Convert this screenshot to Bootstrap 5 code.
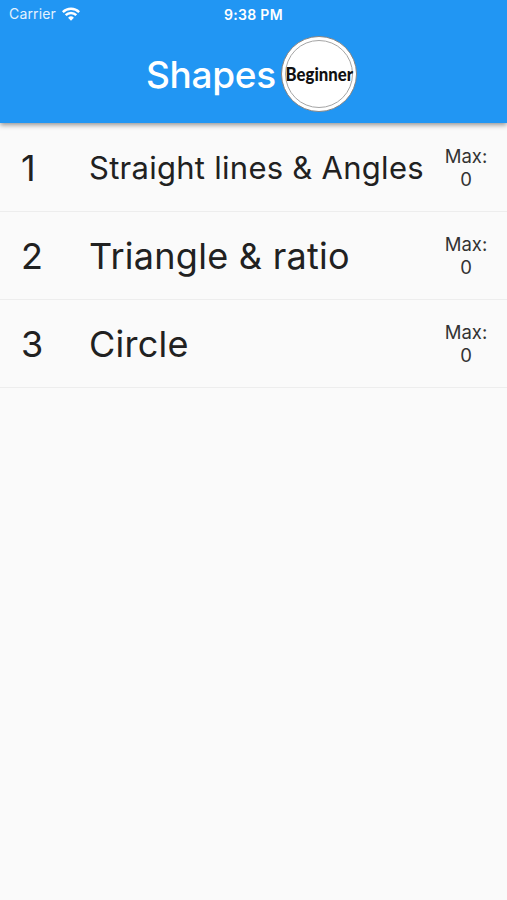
<!DOCTYPE html>
<html lang="en">
<head>
<meta charset="utf-8">
<meta name="viewport" content="width=device-width, initial-scale=1">
<title>Shapes</title>
<link href="https://cdn.jsdelivr.net/npm/bootstrap@5.3.0/dist/css/bootstrap.min.css" rel="stylesheet">
<style>
body{background:#fafafa;color:#212121;font-family:Inter,"Liberation Sans",sans-serif;min-height:100vh;overflow:hidden}
main{padding-top:1px}
.app-bar{background:#2196f3;height:123px;box-shadow:0 2px 5px rgba(0,0,0,.42)}
.status{height:27px;padding-left:9px;font-size:14px;line-height:27px}
.status .carrier{letter-spacing:.15px;width:53px;color:#e4f2fe}
.status .clock{width:64px;margin-left:144px;font-size:14px;letter-spacing:.3px;margin-top:1px}
.title-row{height:94px;padding-left:146px}
.title-text{font-size:37px;font-weight:500;line-height:1;letter-spacing:-.3px;width:135px;margin-top:1px}
.level{width:76px;height:76px;background:#fff;border:1px solid #858585;padding:3px}
.level-ring{border:1.5px solid #a5a5a5}
.level-text{font:900 18px/1 Lato,sans-serif;color:#111;transform:scale(.93,1.04)}
.lesson{height:88px;border-bottom:1px solid #ededed;padding:0 19px 0 21px}
.num{font-size:36px;width:68px;line-height:1}
.name{font-size:36px;line-height:1;letter-spacing:.27px}
.name-long{font-size:31px}
.score{font-size:18.5px;line-height:23px;width:44px;color:#333}
</style>
</head>
<body>
<header class="app-bar text-white position-relative">
  <div class="status d-flex align-items-center text-nowrap">
    <span class="carrier">Carrier</span>
    <svg width="18" height="14" viewBox="0 0 18 14" fill="none" stroke="#fff" stroke-width="2.5"><path d="M.8 5.1a11.7 11.7 0 0 1 16.4 0M3.7 8.1a7.5 7.5 0 0 1 10.6 0"/><path d="M9 13.7 6.1 10.8a4.1 4.1 0 0 1 5.8 0Z" fill="#fff" stroke="none"/></svg>
    <span class="clock fw-semibold">9:38 PM</span>
  </div>
  <div class="title-row d-flex align-items-center">
    <h1 class="title-text mb-0">Shapes</h1>
    <div class="level rounded-circle"><div class="level-ring rounded-circle w-100 h-100 d-flex align-items-center justify-content-center"><span class="level-text">Beginner</span></div></div>
  </div>
</header>
<main>
  <div class="lesson d-flex align-items-center"><span class="num">1</span><span class="name name-long flex-grow-1 text-nowrap">Straight lines &amp; Angles</span><span class="score text-center">Max:<br>0</span></div>
  <div class="lesson d-flex align-items-center"><span class="num">2</span><span class="name flex-grow-1 text-nowrap">Triangle &amp; ratio</span><span class="score text-center">Max:<br>0</span></div>
  <div class="lesson d-flex align-items-center"><span class="num">3</span><span class="name flex-grow-1 text-nowrap">Circle</span><span class="score text-center">Max:<br>0</span></div>
</main>
<script src="https://cdn.jsdelivr.net/npm/bootstrap@5.3.0/dist/js/bootstrap.bundle.min.js"></script>
</body>
</html>
